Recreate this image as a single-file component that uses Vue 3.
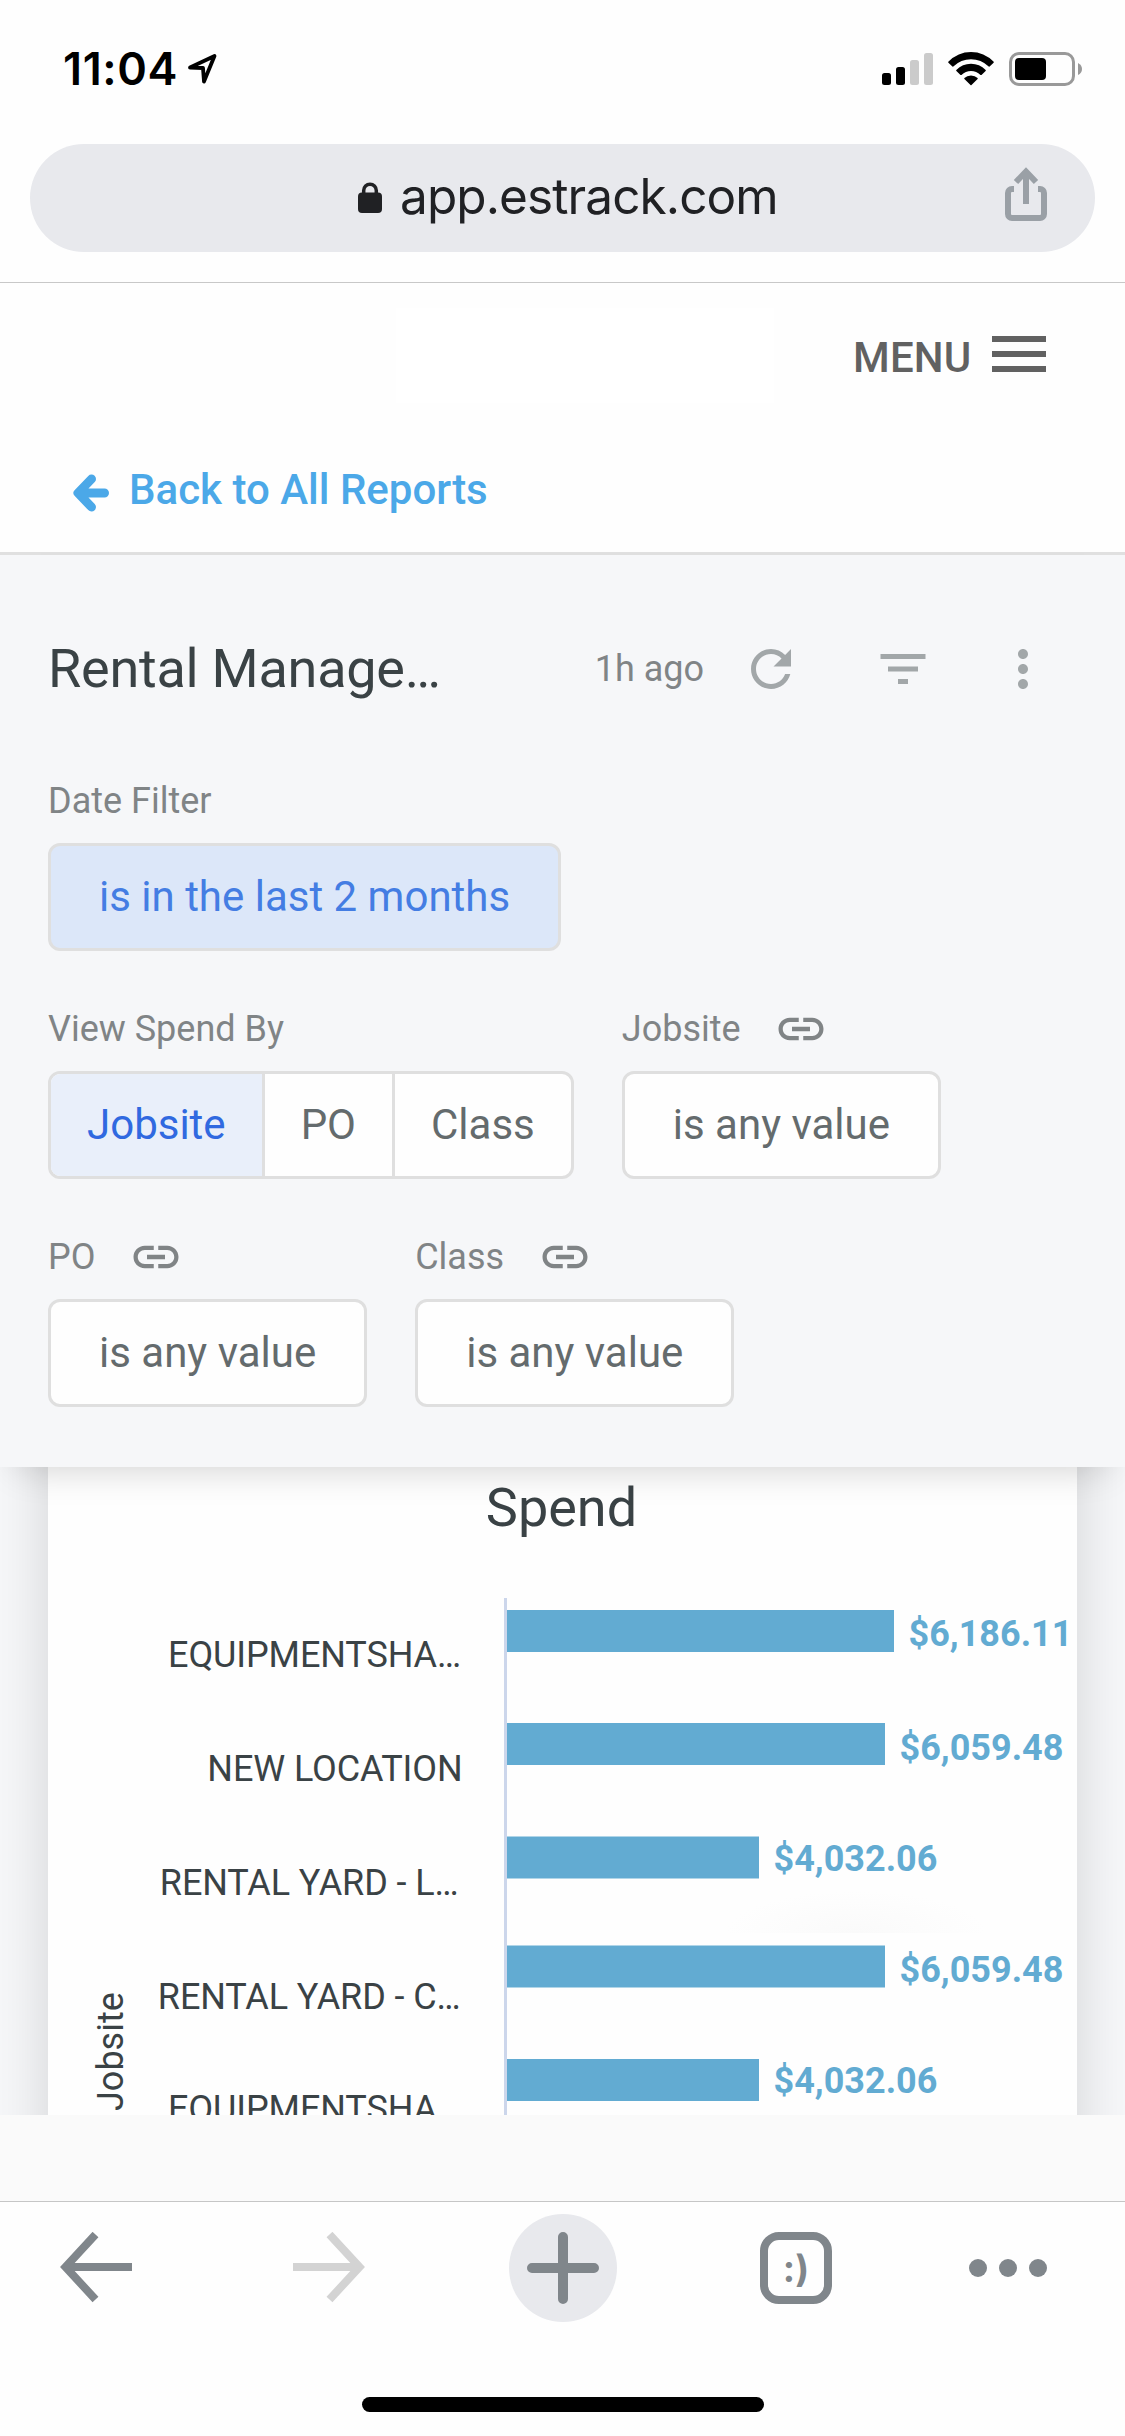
<script setup>
const filterRows = [
  [{ label: 'Date Filter', value: 'is in the last 2 months', active: true }],
  [
    { label: 'View Spend By', options: ['Jobsite', 'PO', 'Class'], selected: 'Jobsite' },
    { label: 'Jobsite', value: 'is any value', linked: true },
  ],
  [
    { label: 'PO', value: 'is any value', linked: true },
    { label: 'Class', value: 'is any value', linked: true },
  ],
]

// y is the top of each bar, labelY and valueY are text baselines inside the chart
const bars = [
  { name: 'EQUIPMENTSHA…', value: '$6,186.11', y: 143, width: 387, labelY: 199.5, valueY: 179, labelX: 413 },
  { name: 'NEW LOCATION', value: '$6,059.48', y: 256, width: 378, labelY: 314, valueY: 293, labelX: 414.5 },
  { name: 'RENTAL YARD - L…', value: '$4,032.06', y: 369.5, width: 252, labelY: 428, valueY: 404, labelX: 410.5 },
  { name: 'RENTAL YARD - C…', value: '$6,059.48', y: 478.5, width: 378, labelY: 542, valueY: 515, labelX: 412.5 },
  { name: 'EQUIPMENTSHA…', value: '$4,032.06', y: 592, width: 252, labelY: 654, valueY: 626, labelX: 413 },
]
</script>

<template>
  <div class="screen">
    <header class="chrome">
      <div class="status">
        <span class="time">11:04</span>
        <svg class="location" width="32" height="32" viewBox="0 0 32 32">
          <path d="M3 14.5 27.5 3 17 28.5 16 15Z" fill="none" stroke="#000" stroke-width="3.8" stroke-linejoin="round" />
        </svg>
        <svg class="signal" width="51" height="34" viewBox="0 0 51 34">
          <rect x="0" y="21" width="9" height="12" rx="2.5" />
          <rect x="14" y="15" width="9" height="18" rx="2.5" />
          <rect x="28" y="8" width="9" height="25" rx="2.5" fill="#cbcbcb" />
          <rect x="42" y="1" width="9" height="32" rx="2.5" fill="#cbcbcb" />
        </svg>
        <svg class="wifi" width="46" height="34" viewBox="0 0 46 34">
          <path d="M0.3 9.8Q10 0 23 0T45.7 9.8Q46 10.3 45.6 10.8L41.6 14.6Q41.2 14.9 40.7 14.5Q33 7.3 23 7.3T5.3 14.5Q4.8 14.9 4.4 14.6L.4 10.8Q0 10.3.3 9.8Z" />
          <path d="M8.3 18Q14.5 11.8 23 11.8T37.7 18Q38.1 18.5 37.6 19L33.5 22.9Q33 23.3 32.5 22.9Q28.4 19 23 19T13.5 22.9Q13 23.3 12.5 22.9L8.4 19Q7.9 18.5 8.3 18Z" />
          <path d="M16.4 26Q19 23.5 23 23.5T29.6 26Q30 26.5 29.6 27L23.5 33Q23 33.5 22.5 33L16.4 27Q16 26.5 16.4 26Z" />
        </svg>
        <svg class="battery" width="74" height="34" viewBox="0 0 74 34">
          <rect x="1.5" y="1.5" width="63" height="31" rx="8.5" fill="none" stroke="#999" stroke-width="3" />
          <rect x="6" y="6" width="31" height="22" rx="4" />
          <path d="M69 11Q73 13 73 17T69 23Z" fill="#999" />
        </svg>
      </div>
      <div class="address">
        <svg class="lock" width="26" height="32" viewBox="0 0 26 32">
          <rect x="1" y="10.5" width="24" height="20.5" rx="4" fill="#202124" />
          <path d="M6.7 12V8.5a6.3 6.3 0 0 1 12.6 0V12" fill="none" stroke="#202124" stroke-width="3.5" />
        </svg>
        <span class="url">app.estrack.com</span>
        <svg class="share" width="42" height="54" viewBox="0 0 42 54">
          <g fill="none" stroke="#9aa0a6" stroke-width="6">
            <path d="M9 22H7a4 4 0 0 0-4 4v21a4 4 0 0 0 4 4h28a4 4 0 0 0 4-4V26a4 4 0 0 0-4-4h-2" />
            <path d="M21 37V5M11 15 21 4.5 31 15" />
          </g>
        </svg>
      </div>
    </header>

    <section class="site">
      <div class="menu-row">
        <div class="brand"></div>
        <span class="menu-text">MENU</span>
        <div class="burger"><i></i><i></i><i></i></div>
      </div>
      <a class="back">
        <svg width="36" height="38" viewBox="0 0 36 38">
          <path d="M18.5 5 5 19 18.5 33M7 19H31.500" fill="none" stroke="#4ba8e8" stroke-width="9" stroke-linecap="round" stroke-linejoin="round" />
        </svg>
        <span>Back to All Reports</span>
      </a>
    </section>

    <section class="panel">
      <div class="title-row">
        <h1>Rental Manage…</h1>
        <span class="ago">1h ago</span>
        <svg class="tool refresh" viewBox="0 0 24 24"><path d="M17.650 6.350C16.200 4.900 14.210 4 12 4c-4.420 0-7.990 3.580-7.990 8s3.570 8 7.990 8c3.730 0 6.840-2.550 7.730-6h-2.080c-.82 2.330-3.040 4-5.650 4-3.310 0-6-2.690-6-6s2.690-6 6-6c1.660 0 3.140.69 4.220 1.780L13 11h7V4l-2.350 2.350z" /></svg>
        <svg class="tool filter" viewBox="0 0 24 24"><path d="M10 18h4v-2h-4v2zM3 6v2h18V6H3zm3 7h12v-2H6v2z" /></svg>
        <svg class="tool more" viewBox="0 0 24 24"><path d="M12 8c1.100 0 2-.9 2-2s-.9-2-2-2-2 .9-2 2 .9 2 2 2zm0 2c-1.100 0-2 .9-2 2s.9 2 2 2 2-.9 2-2-.9-2-2-2zm0 6c-1.100 0-2 .9-2 2s.9 2 2 2 2-.9 2-2-.9-2-2-2z" /></svg>
      </div>
      <div v-for="(row, r) in filterRows" :key="r" class="filter-row">
        <div v-for="f in row" :key="f.label" class="field">
          <div class="label">
            <span>{{ f.label }}</span>
            <svg v-if="f.linked" viewBox="0 0 24 24"><path d="M3.900 12c0-1.710 1.390-3.100 3.100-3.100h4V7H7c-2.760 0-5 2.240-5 5s2.240 5 5 5h4v-1.900H7c-1.710 0-3.100-1.390-3.100-3.100zM8 13h8v-2H8v2zm9-6h-4v1.900h4c1.710 0 3.100 1.390 3.100 3.100s-1.390 3.100-3.100 3.100h-4V17h4c2.760 0 5-2.240 5-5s-2.240-5-5-5z" /></svg>
          </div>
          <div v-if="f.options" class="segments">
            <button v-for="o in f.options" :key="o" :class="{ on: o === f.selected }">{{ o }}</button>
          </div>
          <button v-else class="chip" :class="{ active: f.active }">{{ f.value }}</button>
        </div>
      </div>
    </section>

    <main class="content">
      <article class="card">
        <svg class="chart" width="1029" height="648" viewBox="0 0 1029 648">
          <defs>
            <radialGradient id="haze" cx="50%" cy="100%" r="100%" gradientTransform="matrix(.5 0 0 1 .25 0)">
              <stop offset="0" stop-color="#fafafa" />
              <stop offset="1" stop-color="#fefefe" />
            </radialGradient>
          </defs>
          <rect x="678" y="424" width="260" height="42" fill="url(#haze)" />
          <text x="513.500" y="59" class="chart-title" text-anchor="middle">Spend</text>
          <text class="axis-title" transform="translate(75 644) rotate(-90)">Jobsite</text>
          <g v-for="(b, i) in bars" :key="i">
            <text class="bar-label" :x="b.labelX" :y="b.labelY" text-anchor="end">{{ b.name }}</text>
            <rect x="459" :y="b.y" :width="b.width" height="42" fill="#62abd2" />
            <text class="bar-value" :x="459 + b.width + 14.5" :y="b.valueY">{{ b.value }}</text>
          </g>
          <rect x="456" y="131" width="3" height="517" fill="#ccd6eb" />
        </svg>
      </article>
    </main>

    <div class="page-end"></div>

    <footer class="toolbar">
      <nav class="nav">
        <svg width="72" height="72" viewBox="0 0 72 72"><path d="M72 35H5M35.500 2.500 5.500 35 35.500 67.500" fill="none" stroke="#80868b" stroke-width="8" /></svg>
        <svg width="72" height="72" viewBox="0 0 72 72"><path d="M0 35H67M36.500 2.500 66.500 35 36.500 67.500" fill="none" stroke="#d3d3d3" stroke-width="8" /></svg>
        <div class="plus">
          <svg width="72" height="72" viewBox="0 0 72 72"><path d="M36 5V67M5 36H67" fill="none" stroke="#80868b" stroke-width="10" stroke-linecap="round" /></svg>
        </div>
        <div class="tabs">:)</div>
        <svg width="78" height="18" viewBox="0 0 78 18" fill="#80868b"><circle cx="9" cy="9" r="9" /><circle cx="39" cy="9" r="9" /><circle cx="69" cy="9" r="9" /></svg>
      </nav>
      <div class="home"></div>
    </footer>
  </div>
</template>

<style>
body {
  margin: 0;
}
</style>

<style scoped>
.screen {
  width: 1125px;
  height: 2436px;
  display: flex;
  flex-direction: column;
  overflow: hidden;
  background: #fefefe;
  font-family: Roboto, sans-serif;
}
svg {
  display: block;
  flex: none;
}
.chrome {
  box-sizing: border-box;
  height: 283px;
  padding: 0 30px;
  border-bottom: 1px solid #c8c8c8;
}
.status {
  height: 144px;
  display: flex;
  align-items: flex-start;
  box-sizing: border-box;
  padding: 52px 12px 0 33px;
}
.time {
  width: 122px;
  font: 600 45px/34px Inter, sans-serif;
  letter-spacing: 0.6px;
  white-space: nowrap;
}
.location {
  margin: 1px auto 0 2px;
}
.wifi {
  margin: 0 15px;
}
.address {
  height: 108px;
  box-sizing: border-box;
  padding: 0 48px 0 327px;
  display: flex;
  align-items: center;
  border-radius: 54px;
  background: #e8e9ed;
}
.url {
  margin-left: 17px;
  padding-bottom: 3px;
  font: 400 49.5px/105px Inter, sans-serif;
  letter-spacing: -0.9px;
  color: #202124;
  white-space: nowrap;
}
.share {
  margin: -8px 0 0 auto;
}
.site {
  box-sizing: border-box;
  height: 272px;
  border-bottom: 3px solid #e0e0e0;
  padding: 25px 79px 0 73px;
}
.menu-row {
  display: flex;
  height: 95px;
}
.brand {
  width: 378px;
  margin: 0 auto 0 323px;
  background: #fff;
}
.menu-text {
  margin-right: 20.5px;
  font-size: 42px;
  font-weight: 500;
  line-height: 99px;
  letter-spacing: 0.2px;
  color: #616161;
}
.burger {
  display: flex;
  flex-direction: column;
  gap: 9px;
  width: 54px;
  padding-top: 28px;
}
.burger i {
  height: 6px;
  background: #616161;
}
.back {
  display: flex;
  align-items: center;
  height: 50px;
  margin-top: 63px;
  font-size: 42px;
  font-weight: 500;
  color: #4ba8e8;
}
.back svg {
  margin-top: 4px;
}
.back span {
  margin-left: 20px;
  line-height: 50px;
  padding-bottom: 2px;
}
.panel {
  position: relative;
  z-index: 1;
  box-sizing: border-box;
  height: 912px;
  padding: 84px 48px 0;
  background: #f6f7f9;
  box-shadow: 0 18px 36px -18px rgba(0, 0, 0, 0.2);
}
.title-row {
  display: flex;
  align-items: center;
  height: 60px;
  margin: 0 24px 24px 0;
}
h1 {
  margin: 0 auto 0 0;
  font-size: 54px;
  font-weight: 400;
  line-height: 60px;
  letter-spacing: -0.25px;
  color: #3a4245;
}
.ago {
  font-size: 36px;
  color: #808486;
}
.tool {
  width: 60px;
  height: 60px;
  fill: #a2a7a9;
}
.refresh {
  margin-left: 37px;
}
.filter {
  margin: 0 60px 0 72px;
}
.filter-row {
  display: flex;
  gap: 48px;
  padding-top: 51px;
}
.label {
  display: flex;
  align-items: center;
  height: 54px;
  margin-bottom: 15px;
  font-size: 36px;
  color: #808486;
}
.label svg {
  width: 54px;
  height: 54px;
  margin-left: 33.5px;
  fill: #808486;
}
button {
  font: 400 42px/102px Roboto, sans-serif;
  color: #646b6d;
  background: none;
  border: 0;
  padding: 0;
  white-space: nowrap;
}
.chip {
  display: block;
  height: 108px;
  padding: 0 48px;
  border: 3px solid #dfdfdf;
  border-radius: 12px;
  background: #fefefe;
}
.chip.active {
  background: #dce7f9;
  color: #447de3;
}
.segments {
  display: flex;
  box-sizing: border-box;
  height: 108px;
  border: 3px solid #dfdfdf;
  border-radius: 12px;
  overflow: hidden;
  background: #fefefe;
}
.segments button {
  padding: 0 36px;
}
.segments button + button {
  border-left: 3px solid #dfdfdf;
}
.segments .on {
  background: #e9effa;
  color: #3069e0;
}
.content {
  height: 648px;
  padding: 0 48px;
  overflow: hidden;
  background: #f6f7f9;
}
.card {
  height: 900px;
  margin-top: -100px;
  padding-top: 100px;
  background: #fefefe;
  box-shadow: 0 0 54px rgba(0, 0, 0, 0.15);
}
.chart-title {
  font-size: 54px;
  fill: #3a4245;
}
.axis-title,
.bar-label {
  font-size: 36px;
  fill: #3a4245;
}
.bar-label {
  letter-spacing: -0.1px;
}
.bar-value {
  font-size: 36px;
  font-weight: 700;
  fill: #62abd2;
}
.page-end {
  height: 86px;
  background: #fafafa;
}
.toolbar {
  flex: 1;
  border-top: 1px solid #c6c6c6;
}
.nav {
  display: grid;
  grid-template-columns: 233px 216px 251px 209px 78px;
  align-items: center;
  height: 132px;
  padding-left: 60px;
}
.plus {
  display: flex;
  align-items: center;
  justify-content: center;
  width: 108px;
  height: 108px;
  border-radius: 50%;
  background: #e8e9ed;
}
.tabs {
  box-sizing: border-box;
  width: 72px;
  height: 72px;
  border: 8px solid #80868b;
  border-radius: 19px;
  font: 700 37px/58px Inter, sans-serif;
  text-align: center;
  color: #80868b;
}
.home {
  width: 402px;
  height: 15px;
  margin: 63px auto 0;
  border-radius: 8px;
  background: #000;
}
</style>
